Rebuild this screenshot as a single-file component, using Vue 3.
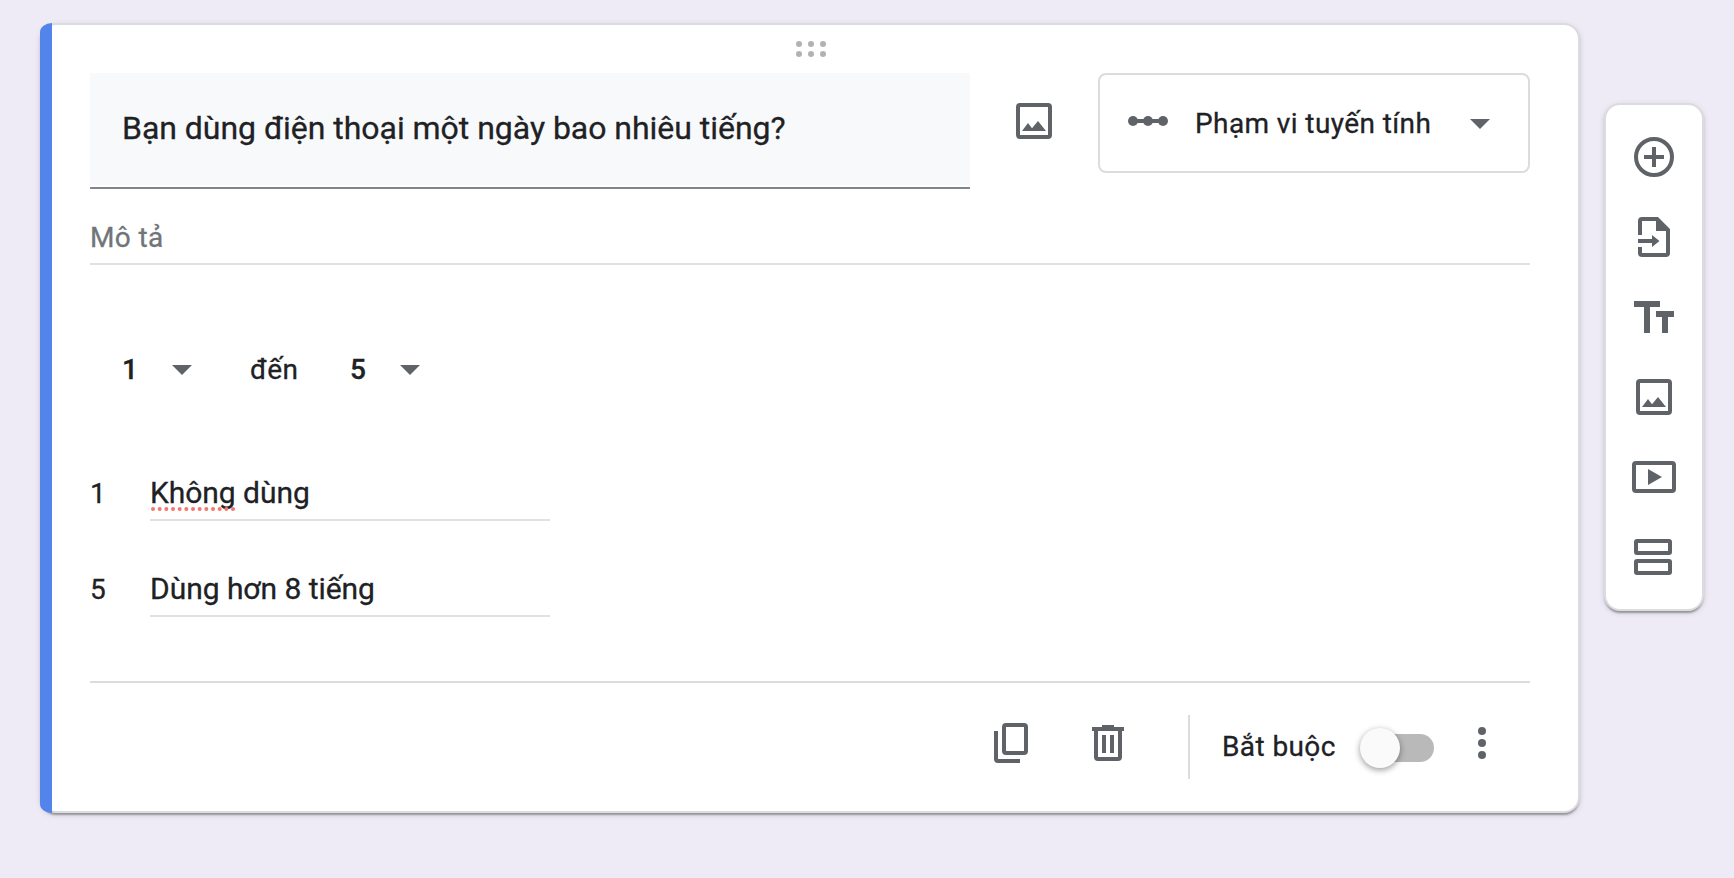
<script setup>
const scaleLabels = [
  { value: '1', marked: 'Không', rest: ' dùng' },
  { value: '5', marked: '', rest: 'Dùng hơn 8 tiếng' },
]
</script>

<template>
  <div class="page">
    <section class="card">
      <div class="grip">
        <svg width="30" height="16" viewBox="0 0 30 16" fill="#b2b2b2">
          <circle cx="3" cy="3" r="3" /><circle cx="15" cy="3" r="3" /><circle cx="27" cy="3" r="3" />
          <circle cx="3" cy="13" r="3" /><circle cx="15" cy="13" r="3" /><circle cx="27" cy="13" r="3" />
        </svg>
      </div>

      <div class="head">
        <div class="question"><div class="question-box"><span>Bạn dùng điện thoại một ngày bao nhiêu tiếng?</span></div></div>
        <svg class="head-image" width="48" height="48" viewBox="0 0 48 48" fill="#5f6368">
          <path fill-rule="evenodd" d="M10 6h28a4 4 0 0 1 4 4v28a4 4 0 0 1-4 4H10a4 4 0 0 1-4-4V10a4 4 0 0 1 4-4zM10 10v28h28V10z" />
          <path d="M12 34l6-8 4 5.2L28 24l8 10z" />
        </svg>
        <div class="type">
          <svg width="40" height="10" viewBox="0 0 40 10" fill="#5f6368">
            <circle cx="5" cy="5" r="5" /><circle cx="20" cy="5" r="5" /><circle cx="35" cy="5" r="5" /><path d="M5 3h30v4H5z" />
          </svg>
          <span class="type-text">Phạm vi tuyến tính</span>
          <svg class="type-arrow" width="20" height="10" viewBox="0 0 20 10"><path d="M0 0h20L10 10z" fill="#5f6368" /></svg>
        </div>
      </div>

      <div class="desc">Mô tả</div>

      <div class="range">
        <b>1</b>
        <svg class="arrow-low" width="20" height="10" viewBox="0 0 20 10"><path d="M0 0h20L10 10z" fill="#5f6368" /></svg>
        <span class="to">đến</span>
        <b class="high">5</b>
        <svg class="arrow-high" width="20" height="10" viewBox="0 0 20 10"><path d="M0 0h20L10 10z" fill="#5f6368" /></svg>
      </div>

      <div v-for="row in scaleLabels" :key="row.value" class="label-row">
        <span class="num">{{ row.value }}</span>
        <div class="label-input"><span v-if="row.marked" class="misspelt">{{ row.marked }}<svg class="dots" width="84" height="4" viewBox="0 0 84 4"><circle v-for="n in 13" :key="n" :cx="2 + (n - 1) * 6.667" cy="2" r="2" fill="#f5766c" /></svg></span><span class="rest">{{ row.rest }}</span></div>
      </div>

      <footer class="foot">
        <svg class="copy" width="34" height="40" viewBox="0 0 34 40" fill="none" stroke="#5f6368" stroke-width="4">
          <rect x="10" y="2" width="22" height="28" rx="2" />
          <path d="M2 8v28a2 2 0 0 0 2 2h22" />
        </svg>
        <svg class="trash" width="32" height="36" viewBox="0 0 32 36" fill="#5f6368">
          <path d="M10 0h12v2h10v4H0V2h10zM10 10h4v18h-4zM18 10h4v18h-4z" />
          <path d="M2 5h4v27h20V5h4v27a4 4 0 0 1-4 4H6a4 4 0 0 1-4-4z" />
        </svg>
        <div class="sep"></div>
        <span class="required">Bắt buộc</span>
        <div class="toggle"><div class="thumb"></div></div>
        <svg class="more" width="8" height="32" viewBox="0 0 8 32" fill="#5f6368">
          <circle cx="4" cy="4" r="4" /><circle cx="4" cy="16" r="4" /><circle cx="4" cy="28" r="4" />
        </svg>
      </footer>
    </section>

    <nav class="tools">
      <svg width="48" height="48" viewBox="0 0 48 48">
        <circle cx="24" cy="24" r="18" fill="none" stroke="#5f6368" stroke-width="4" />
        <path d="M22 14h4v8h8v4h-8v8h-4v-8h-8v-4h8z" fill="#5f6368" />
      </svg>
      <svg width="48" height="48" viewBox="0 0 48 48" fill="#5f6368">
        <path d="M8 22V8a4 4 0 0 1 4-4h16l12 12v24a4 4 0 0 1-4 4H12a4 4 0 0 1-4-4v-6h4v6h24V18H26V8H12v14z" />
        <path d="M8 26h14v-4l7.5 6-7.5 6v-4H8z" />
      </svg>
      <svg width="48" height="48" viewBox="0 0 48 48" fill="#5f6368">
        <path d="M4 8h26v6h-10v26h-6V14H4z" /><path d="M26 18h18v6h-6v16h-6V24h-6z" />
      </svg>
      <svg width="48" height="48" viewBox="0 0 48 48" fill="#5f6368">
        <path fill-rule="evenodd" d="M10 6h28a4 4 0 0 1 4 4v28a4 4 0 0 1-4 4H10a4 4 0 0 1-4-4V10a4 4 0 0 1 4-4zM10 10v28h28V10z" />
        <path d="M12 34l6-8 4 5.2L28 24l8 10z" />
      </svg>
      <svg width="48" height="48" viewBox="0 0 48 48" fill="#5f6368">
        <path fill-rule="evenodd" d="M6 8h36a4 4 0 0 1 4 4v24a4 4 0 0 1-4 4H6a4 4 0 0 1-4-4V12a4 4 0 0 1 4-4zM6 12v24h36V12z" />
        <path d="M18 16l14 8-14 8z" />
      </svg>
      <svg width="48" height="48" viewBox="0 0 48 48" fill="none" stroke="#5f6368" stroke-width="4">
        <rect x="6" y="8" width="34" height="12" rx="1" /><rect x="6" y="28" width="34" height="12" rx="1" />
      </svg>
    </nav>
  </div>
</template>

<style>
html, body { background: #efebf6; }
</style>

<style scoped>
* { box-sizing: border-box; }
svg { display: block; flex: none; }
.page {
  display: flex;
  align-items: flex-start;
  gap: 24px;
  width: 1734px;
  height: 878px;
  padding: 23px 0 0 40px;
  overflow: hidden;
  background: #efebf6;
  font-family: Roboto, "Liberation Sans", sans-serif;
  font-size: 28px;
  line-height: 40px;
  letter-spacing: .4px;
  -webkit-text-stroke: .3px;
  color: #202124;
  white-space: nowrap;
}
.card, .tools {
  background: #fff;
  border: 2px solid #dadce0;
  box-shadow: 0 4px 2px -2px rgba(0, 0, 0, .2), 0 2px 2px 0 rgba(0, 0, 0, .14), 0 2px 6px 0 rgba(0, 0, 0, .12);
}
.card {
  position: relative;
  flex: none;
  width: 1540px;
  height: 790px;
  padding: 0 48px;
  border-radius: 16px;
}
.card::before {
  content: "";
  position: absolute;
  left: -2px;
  top: -2px;
  bottom: -2px;
  width: 12px;
  background: #5384ec;
  border-radius: 16px 0 0 16px / 12px 0 0 12px;
}
.grip { display: flex; justify-content: center; height: 48px; padding: 16px 0 0 2px; }
.head { display: flex; align-items: flex-start; }
.question { width: 880px; height: 116px; border-bottom: 2px solid #80868b; }
.question-box { height: 112px; padding: 31px 32px 0; background: #f8f9fb; font-size: 32px; line-height: 48px; letter-spacing: -.03px; }
.head-image { margin: 24px 40px 0; }
.type {
  display: flex;
  width: 432px;
  height: 100px;
  padding: 0 38px 0 28px;
  border: 2px solid #dadce0;
  border-radius: 8px;
}
.type svg { margin-top: 41px; }
.type-text { margin: 29px 0 0 27px; }
.type .type-arrow { margin-top: 44px; margin-left: auto; }
.desc { height: 76px; padding-top: 29px; color: #70757a; border-bottom: 2px solid #e0e0e0; }
.range { display: flex; height: 208px; padding: 85px 0 0 32px; }
.range b { width: 16px; font-weight: 500; }
.range svg { margin-top: 15px; }
.range .arrow-low { margin-left: 34px; }
.to { width: 64px; margin-left: 58px; }
.range .high { margin-left: 36px; }
.range .arrow-high { margin-left: 34px; }
.label-row { display: flex; height: 48px; margin-bottom: 48px; }
.num { width: 60px; padding-top: 1px; }
.label-input { width: 400px; height: 48px; border-bottom: 2px solid #e0e0e0; font-size: 30px; letter-spacing: -.04px; white-space: pre; }
.misspelt { position: relative; }
.dots { position: absolute; left: 1px; bottom: -1px; }
.foot { display: flex; height: 130px; margin-top: 64px; padding-left: 904px; border-top: 2px solid #dadce0; }
.copy { margin-top: 40px; }
.trash { margin: 42px 0 0 64px; }
.sep { width: 2px; height: 64px; margin: 32px 0 0 64px; background: #dadce0; }
.required { width: 138px; margin: 44px 0 0 32px; }
.toggle { width: 72px; height: 28px; margin: 51px 0 0 2px; border-radius: 14px; background: #b9b9b9; }
.thumb {
  width: 40px;
  height: 40px;
  margin: -6px 0 0 -2px;
  border-radius: 50%;
  background: #fafafa;
  box-shadow: 0 2px 6px rgba(0, 0, 0, .4);
}
.more { margin: 44px 0 0 44px; }
.tools {
  display: flex;
  flex-direction: column;
  align-items: center;
  gap: 32px;
  width: 100px;
  height: 508px;
  margin-top: 80px;
  padding-top: 28px;
  border-radius: 16px;
}
</style>
